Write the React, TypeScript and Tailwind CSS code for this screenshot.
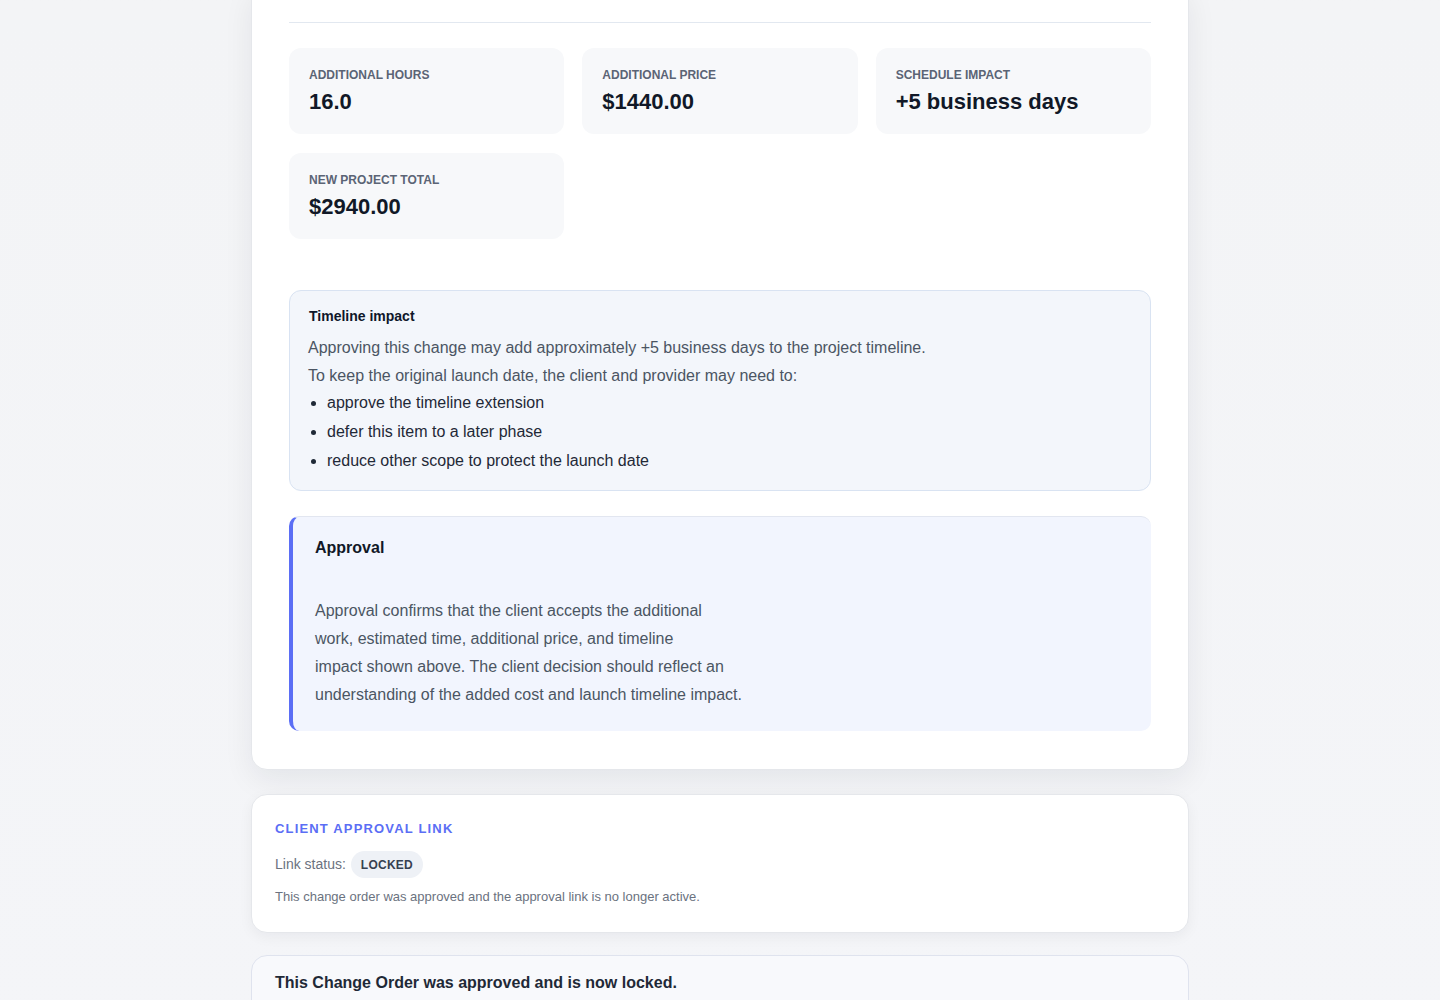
import React from "react";

const stats = [
  { label: "Additional hours", value: "16.0" },
  { label: "Additional price", value: "$1440.00" },
  { label: "Schedule impact", value: "+5 business days" },
  { label: "New project total", value: "$2940.00" },
];

const options = [
  "approve the timeline extension",
  "defer this item to a later phase",
  "reduce other scope to protect the launch date",
];

const approvalLines = [
  "Approval confirms that the client accepts the additional",
  "work, estimated time, additional price, and timeline",
  "impact shown above. The client decision should reflect an",
  "understanding of the added cost and launch timeline impact.",
];

export default function App() {
  return (
    <div
      className="min-h-[1000px] bg-gradient-to-b from-[#f3f4f6] to-[#f4f5f8] overflow-hidden"
      style={{ fontFamily: '"Liberation Sans", Arial, sans-serif' }}
    >
      <div className="mx-auto w-[938px] -mt-[16px] flex flex-col gap-[24px]">
        {/* Change order summary card */}
        <section className="bg-white rounded-2xl border border-[#e5e7eb] shadow-[0_10px_30px_rgba(15,23,42,0.07)] px-[37px] pt-[37px] pb-[38px]">
          <div className="border-t border-[#e2e8f0]" />

          <div className="mt-[25px] grid grid-cols-3 gap-x-[18px] gap-y-[19px]">
            {stats.map((s) => (
              <div key={s.label} className="bg-[#f7f8fa] rounded-[12px] px-[20px] pt-[19px] pb-[20px] h-[86px]">
                <div className="text-[12px] leading-[16px] font-bold uppercase text-[#5b6475]">{s.label}</div>
                <div className="mt-[5px] text-[22px] leading-[28px] font-bold text-[#111827]">{s.value}</div>
              </div>
            ))}
          </div>

          <div className="mt-[51px] rounded-[12px] border border-[#d9e3f2] bg-[#f3f6fb] pl-[18px] pr-[19px] pt-[15px] pb-[15px]">
            <div className="pl-[1px] text-[14px] leading-[20px] font-bold text-[#0f172a]">Timeline impact</div>
            <p className="mt-[8px] text-[16px] leading-[28px] text-[#4b5563]">
              Approving this change may add approximately +5 business days to the project timeline.
            </p>
            <p className="text-[16px] leading-[28px] text-[#4b5563]">
              To keep the original launch date, the client and provider may need to:
            </p>
            <ul className="-mt-[2px] list-disc pl-[19px] text-[16px] leading-[29px] text-[#1f2937]">
              {options.map((o) => (
                <li key={o}>{o}</li>
              ))}
            </ul>
          </div>

          <div className="mt-[25px] rounded-[10px] border-l-4 border-t border-l-[#5b6ef5] border-t-[#e2e6f0] bg-[#f2f5fe] pl-[22px] pt-[19px] pb-[22px]">
            <div className="text-[16px] leading-[24px] font-bold text-[#111827]">Approval</div>
            <p className="mt-[37px] text-[16px] leading-[28px] text-[#4b5563]">
              {approvalLines.map((line, i) => (
                <React.Fragment key={i}>
                  {line}
                  {i < approvalLines.length - 1 && <br />}
                </React.Fragment>
              ))}
            </p>
          </div>
        </section>

        {/* Approval link status */}
        <section className="bg-white rounded-2xl border border-[#e5e7eb] shadow-[0_4px_14px_rgba(15,23,42,0.05)] px-[23px] pt-[25px] pb-[26px]">
          <div className="text-[13px] leading-[18px] font-bold uppercase tracking-[0.09em] text-[#5b6ef5]">
            Client approval link
          </div>
          <div className="mt-[13px] flex items-center gap-[5px] text-[14px] text-[#6b7280]">
            <span>Link status:</span>
            <span className="inline-flex items-center h-[27px] px-[10px] rounded-full bg-[#eef1f6] text-[12px] font-bold tracking-[0.02em] text-[#374151]">
              LOCKED
            </span>
          </div>
          <p className="mt-[10px] text-[13px] leading-[18px] text-[#6b7280]">
            This change order was approved and the approval link is no longer active.
          </p>
        </section>

        {/* Locked notice */}
        <section className="-mt-[2px] bg-[#f8f9fc] rounded-2xl border border-[#dfe3ee] px-[23px] pt-[16px] pb-[40px]">
          <div className="text-[16px] leading-[22px] font-bold text-[#1f2937]">
            This Change Order was approved and is now locked.
          </div>
        </section>
      </div>
    </div>
  );
}
